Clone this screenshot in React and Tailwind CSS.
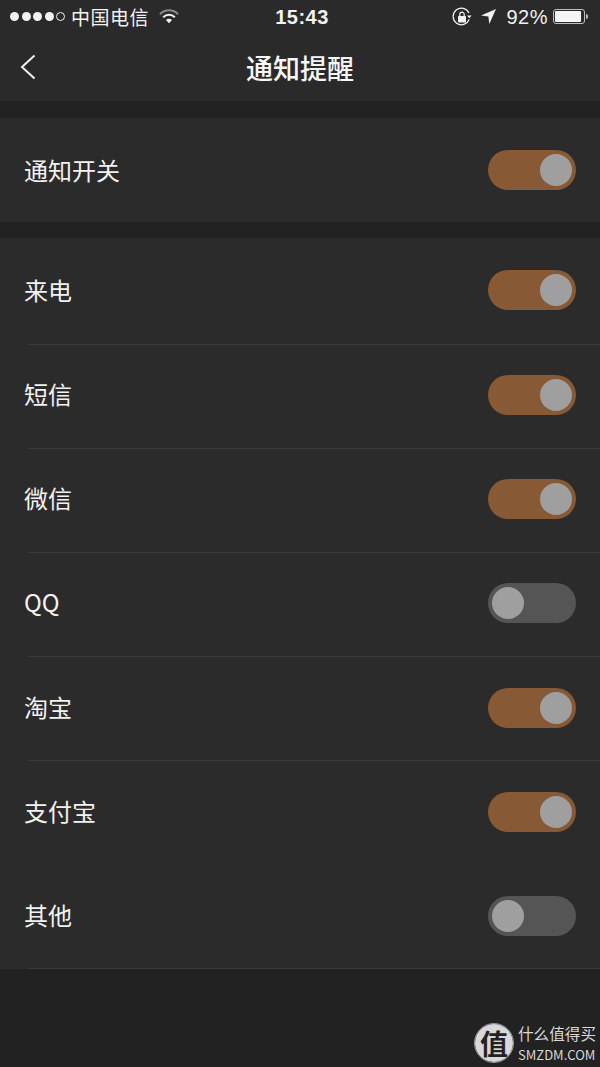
const font = { fontFamily: '"Noto Sans CJK SC", sans-serif' };
const latin = { fontFamily: '"Liberation Sans", "Noto Sans CJK SC", sans-serif' };

function Toggle({ on }) {
  return (
    <div className={`flex h-10 w-[88px] items-center rounded-full px-1 ${on ? 'justify-end bg-[#875a35]' : 'justify-start bg-[#555555]'}`}>
      <div className="h-8 w-8 rounded-full bg-[#9f9f9f]" />
    </div>
  );
}

function Row({ label, on, divider, className = '', labelClass = 'mb-[2px]' }) {
  return (
    <div className={`relative flex items-center justify-between pl-6 pr-6 ${className}`}>
      <span className={`text-[24px] leading-none text-[#f2f2f2] ${labelClass}`}>{label}</span>
      <Toggle on={on} />
      {divider && <div className="absolute bottom-0 left-7 right-0 h-px bg-[#3a3a3a]" />}
    </div>
  );
}

function StatusBar() {
  return (
    <div className="flex h-[33px] items-center justify-between pl-[10px] pr-[12px] text-[#f2f2f2]">
      <div className="flex w-[203px] items-center">
        <div className="flex items-center gap-[2.5px]">
          <span className="h-[9px] w-[9px] rounded-full bg-[#f2f2f2]" />
          <span className="h-[9px] w-[9px] rounded-full bg-[#f2f2f2]" />
          <span className="h-[9px] w-[9px] rounded-full bg-[#f2f2f2]" />
          <span className="h-[9px] w-[9px] rounded-full bg-[#f2f2f2]" />
          <span className="h-[9px] w-[9px] rounded-full border border-[#f2f2f2]" />
        </div>
        <span className="ml-[6px] text-[19px] leading-none tracking-[0.5px]">中国电信</span>
        <svg className="ml-[10px]" width="20" height="15" viewBox="0 0 20 15">
          <path d="M1 5.2a12.5 12.5 0 0 1 18 0" fill="none" stroke="#8a8a8a" strokeWidth="2" />
          <path d="M4.2 8.2a8 8 0 0 1 11.6 0" fill="none" stroke="#f2f2f2" strokeWidth="2" />
          <path d="M7 11a4 4 0 0 1 6 0l-3 3.2z" fill="#f2f2f2" />
        </svg>
      </div>
      <span className="text-[20px] font-bold leading-none tracking-[0.5px]" style={latin}>15:43</span>
      <div className="flex w-[197px] items-center justify-end">
        <svg width="20" height="20" viewBox="0 0 20 20">
          <path d="M17.2 12.4A8.3 8.3 0 1 1 17 6" fill="none" stroke="#f2f2f2" strokeWidth="1.2" />
          <path d="M15 8.4h4.6l-2.3 2.8z" fill="#f2f2f2" />
          <rect x="6" y="9" width="8" height="6.5" rx="0.8" fill="#f2f2f2" />
          <path d="M7.8 9V7.4a2.2 2.2 0 0 1 4.4 0V9" fill="none" stroke="#f2f2f2" strokeWidth="1.2" />
        </svg>
        <svg className="ml-[9px]" width="15" height="15" viewBox="0 0 15 15">
          <path d="M15 0 0 6.6l7.4.9.9 7.5z" fill="#f2f2f2" />
        </svg>
        <span className="ml-[10px] text-[20px] leading-none tracking-[0.5px]" style={latin}>92%</span>
        <div className="ml-[5px] flex items-center">
          <div className="h-[15px] w-[32px] rounded-[3px] border border-[#bdbdbd] p-px">
            <div className="h-full w-[92%] rounded-[1px] bg-[#f5f5f5]" />
          </div>
          <div className="ml-px h-[5px] w-[2px] rounded-r-sm bg-[#bdbdbd]" />
        </div>
      </div>
    </div>
  );
}

export default function App() {
  return (
    <div className="flex h-[1067px] w-[600px] flex-col overflow-hidden bg-[#222222]" style={font}>
      <div className="h-[101px] bg-[#2a2a2a]">
        <StatusBar />
        <div className="relative flex h-[68px] items-center justify-center">
          <svg className="absolute left-[20px] top-[21px]" width="16" height="26" viewBox="0 0 16 26">
            <path d="M14.5 1.5 2 13l12.5 11.5" fill="none" stroke="#f2f2f2" strokeWidth="2" />
          </svg>
          <span className="text-[27px] font-medium leading-none text-[#f7f7f7]">通知提醒</span>
        </div>
      </div>

      <div className="mt-[17px] bg-[#2b2b2b]">
        <Row label="通知开关" on className="h-[104px]" labelClass="" />
      </div>

      <div className="mt-[16px] bg-[#2b2b2b]">
        <Row label="来电" on divider className="h-[107px] pb-[3px]" labelClass="" />
        <Row label="短信" on divider className="h-[104px] pb-[4px]" />
        <Row label="微信" on divider className="h-[104px] pb-[4px]" />
        <Row label="QQ" on={false} divider className="h-[104px] pb-[4px]" />
        <Row label="淘宝" on divider className="h-[104px] pb-[3px]" />
        <Row label="支付宝" on className="h-[104px] pb-[3px]" />
        <Row label="其他" on={false} divider className="h-[104px] pb-[3px]" />
      </div>

      <div className="mt-[54px] flex items-center justify-end pr-[4px]">
        <div className="flex h-[38px] w-[38px] items-center justify-center rounded-full bg-[#d8d8d8] outline outline-1 outline-[#999999]">
          <span className="text-[28px] font-bold leading-none text-[#222222]">值</span>
        </div>
        <div className="ml-[5px] flex w-[78px] flex-col items-start text-[#d8d8d8]">
          <span className="text-[15.6px] leading-[20px]">什么值得买</span>
          <span className="mt-[4px] text-[13px] leading-[16px]">SMZDM.COM</span>
        </div>
      </div>
    </div>
  );
}
